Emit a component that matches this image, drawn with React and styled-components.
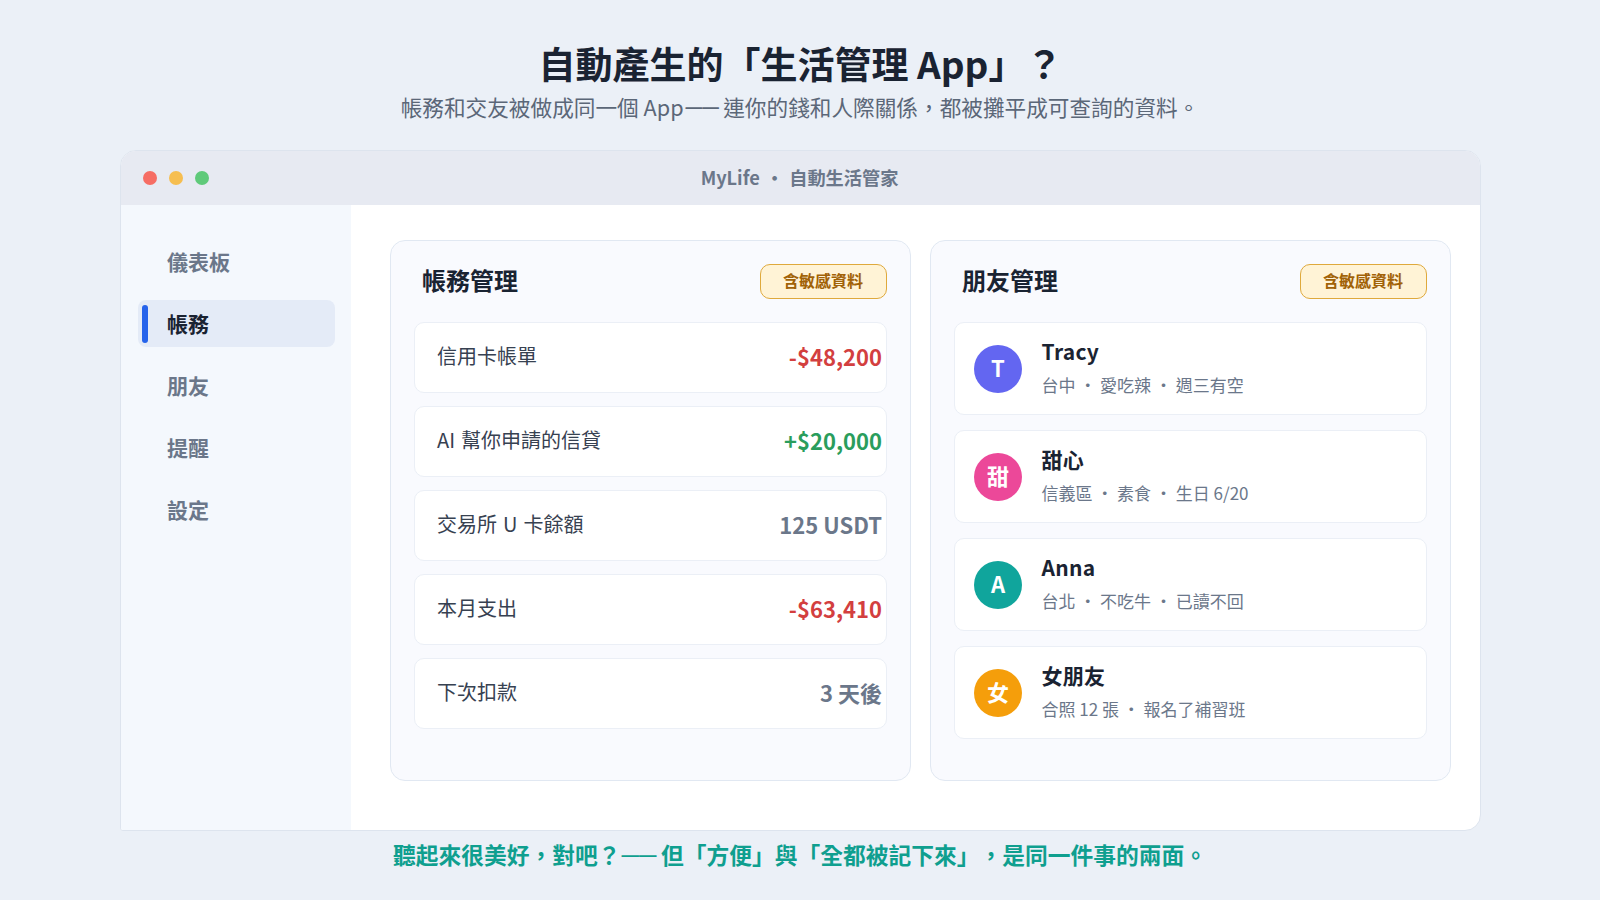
import React from "react";
import styled, { createGlobalStyle } from "styled-components";

const GlobalStyle = createGlobalStyle`
  * {
    box-sizing: border-box;
  }

  body {
    margin: 0;
    font-family: "Noto Sans CJK TC", "Noto Sans", sans-serif;
    text-spacing-trim: space-all;
  }
`;

const Page = styled.div`
  width: 1600px;
  height: 900px;
  overflow: hidden;
  background: #ebf0f7;
  display: flex;
  flex-direction: column;
  align-items: center;
`;

const Header = styled.header`
  height: 150px;
  padding-top: 36px;
  text-align: center;
  white-space: nowrap;
`;

const Title = styled.h1`
  margin: 0;
  padding-left: 1px;
  font-size: 37px;
  line-height: 54px;
  font-weight: 700;
  color: #1a2332;
`;

const Subtitle = styled.p`
  margin: 1px 0 0;
  font-size: 21.65px;
  line-height: 32px;
  color: #5b6778;
`;

// narrower than the full-width CJK dash
const Dash = styled.span`
  margin: 0 -0.5px 0 ${(props) => props.$before || 0}px;
  font-family: "Liberation Sans", sans-serif;
  font-size: 0.77em;
  font-weight: 700;
  line-height: 0;
  vertical-align: 3px;
`;

const Window = styled.section`
  width: 1361px;
  height: 681px;
  display: flex;
  flex-direction: column;
  border: 1px solid #dde4ee;
  border-radius: 16px 16px 16px 3px;
  background: #fff;
  overflow: hidden;
`;

const TitleBar = styled.div`
  flex: 0 0 54px;
  display: grid;
  grid-template-columns: 1fr auto 1fr;
  align-items: center;
  padding: 0 22px 1px;
  background: #e7eaf2;
`;

const Dots = styled.div`
  display: flex;
  gap: 12px;
`;

const Dot = styled.span`
  width: 14px;
  height: 14px;
  border-radius: 50%;
  background: ${(props) => props.$color};
`;

const WindowTitle = styled.div`
  padding: 0 1px 1px 0;
  font-size: 18.2px;
  line-height: 26px;
  font-weight: 700;
  word-spacing: 1.5px;
  color: #6b778a;
`;

const Body = styled.div`
  flex: 1;
  display: flex;
`;

const Sidebar = styled.nav`
  width: 230px;
  padding: 33px 16px 0 17.5px;
  display: flex;
  flex-direction: column;
  gap: 15px;
  background: #f4f8fd;
`;

const NavItem = styled.div`
  height: 47px;
  display: flex;
  align-items: center;
  padding-left: 4px;
  border-radius: 8px;
  font-size: 21px;
  line-height: 30px;
  font-weight: 700;
  color: ${(props) => (props.$active ? "#1a2332" : "#6b778a")};
  background: ${(props) => (props.$active ? "#e4ebf7" : "transparent")};

  &::before {
    content: "";
    width: 6px;
    height: 38px;
    margin-right: 19px;
    border-radius: 3px;
    background: ${(props) => (props.$active ? "#2563eb" : "transparent")};
  }
`;

const NavLabel = styled.span`
  padding-bottom: 2px;
`;

const Main = styled.main`
  flex: 1;
  padding: 35px 29px 49px 39px;
  display: grid;
  grid-template-columns: 1fr 1fr;
  gap: 19px;
`;

const Panel = styled.section`
  padding: 23px;
  border: 1px solid #e1e8f2;
  border-radius: 15px;
  background: #f9fafe;
`;

const PanelHeader = styled.div`
  height: 35px;
  margin-bottom: 23px;
  padding-left: 8.5px;
  display: flex;
  align-items: center;
  justify-content: space-between;
`;

const PanelTitle = styled.h2`
  margin: 0;
  padding-bottom: 4px;
  font-size: 24px;
  line-height: 35px;
  font-weight: 700;
  color: #1a2332;
`;

const Badge = styled.span`
  width: 127px;
  height: 35px;
  display: flex;
  align-items: center;
  justify-content: center;
  padding-bottom: 3px;
  border: 1px solid #dfa93c;
  border-radius: 10px;
  background: #fff3d6;
  font-size: 16px;
  font-weight: 700;
  color: #a16207;
`;

const List = styled.div`
  display: flex;
  flex-direction: column;
  gap: ${(props) => props.$gap}px;
`;

const Card = styled.div`
  display: flex;
  align-items: center;
  border: 1px solid #ebeff6;
  border-radius: 10px;
  background: #fff;
`;

const BillRow = styled(Card)`
  height: 71px;
  justify-content: space-between;
  padding: 0 3.5px 0 22.5px;
`;

const BillName = styled.span`
  padding-bottom: 4px;
  font-size: 20px;
  word-spacing: 1.5px;
  color: #374151;
`;

const amountColors = {
  minus: "#d33f3f",
  plus: "#2a9d5c",
  plain: "#6b778a",
};

const Amount = styled.span`
  padding-bottom: 4px;
  font-size: 22px;
  font-weight: 700;
  color: ${(props) => amountColors[props.$kind]};
`;

const FriendCard = styled(Card)`
  height: 93px;
  padding: 0 19.5px;
  gap: 19.5px;
`;

const Avatar = styled.div`
  width: 48px;
  height: 48px;
  flex: none;
  display: flex;
  align-items: center;
  justify-content: center;
  padding-bottom: 4px;
  border-radius: 50%;
  background: ${(props) => props.$color};
  font-size: 22px;
  font-weight: 700;
  color: #fff;
`;

const FriendName = styled.div`
  margin-top: -3px;
  font-size: 21px;
  line-height: 30px;
  font-weight: 700;
  letter-spacing: 0.3px;
  color: #1a2332;
`;

const FriendNote = styled.div`
  margin-top: 6px;
  font-size: 17px;
  line-height: 26px;
  color: #6b778a;
`;

const Footer = styled.footer`
  padding-top: 7px;
  font-size: 22.75px;
  line-height: 34px;
  font-weight: 700;
  color: #0f9f8f;
  white-space: nowrap;
`;

const navItems = ["儀表板", "帳務", "朋友", "提醒", "設定"];

const bills = [
  { name: "信用卡帳單", amount: "-$48,200", kind: "minus" },
  { name: "AI 幫你申請的信貸", amount: "+$20,000", kind: "plus" },
  { name: "交易所 U 卡餘額", amount: "125 USDT", kind: "plain" },
  { name: "本月支出", amount: "-$63,410", kind: "minus" },
  { name: "下次扣款", amount: "3 天後", kind: "plain" },
];

const friends = [
  { name: "Tracy", initial: "T", color: "#6366f1", note: "台中 ・ 愛吃辣 ・ 週三有空" },
  { name: "甜心", initial: "甜", color: "#ec4899", note: "信義區 ・ 素食 ・ 生日 6/20" },
  { name: "Anna", initial: "A", color: "#10a59c", note: "台北 ・ 不吃牛 ・ 已讀不回" },
  { name: "女朋友", initial: "女", color: "#f59e0b", note: "合照 12 張 ・ 報名了補習班" },
];

const App = () => {
  return (
    <>
      <GlobalStyle />
      <Page lang="zh-TW">
        <Header>
          <Title>自動產生的「生活管理 App」？</Title>
          <Subtitle>
            帳務和交友被做成同一個 App<Dash $before={2}>——</Dash> 連你的錢和人際關係，都被攤平成可查詢的資料。
          </Subtitle>
        </Header>
        <Window>
          <TitleBar>
            <Dots>
              <Dot $color="#f66d64" />
              <Dot $color="#f6be50" />
              <Dot $color="#5fca7a" />
            </Dots>
            <WindowTitle>MyLife ・ 自動生活管家</WindowTitle>
          </TitleBar>
          <Body>
            <Sidebar>
              {navItems.map((item) => (
                <NavItem key={item} $active={item === "帳務"}>
                  <NavLabel>{item}</NavLabel>
                </NavItem>
              ))}
            </Sidebar>
            <Main>
              <Panel>
                <PanelHeader>
                  <PanelTitle>帳務管理</PanelTitle>
                  <Badge>含敏感資料</Badge>
                </PanelHeader>
                <List $gap={13}>
                  {bills.map((bill) => (
                    <BillRow key={bill.name}>
                      <BillName>{bill.name}</BillName>
                      <Amount $kind={bill.kind}>{bill.amount}</Amount>
                    </BillRow>
                  ))}
                </List>
              </Panel>
              <Panel>
                <PanelHeader>
                  <PanelTitle>朋友管理</PanelTitle>
                  <Badge>含敏感資料</Badge>
                </PanelHeader>
                <List $gap={15}>
                  {friends.map((friend) => (
                    <FriendCard key={friend.name}>
                      <Avatar $color={friend.color}>{friend.initial}</Avatar>
                      <div>
                        <FriendName>{friend.name}</FriendName>
                        <FriendNote>{friend.note}</FriendNote>
                      </div>
                    </FriendCard>
                  ))}
                </List>
              </Panel>
            </Main>
          </Body>
        </Window>
        <Footer>
          聽起來很美好，對吧？<Dash $before={1}>——</Dash> 但「方便」與「全都被記下來」，是同一件事的兩面。
        </Footer>
      </Page>
    </>
  );
};

export default App;
